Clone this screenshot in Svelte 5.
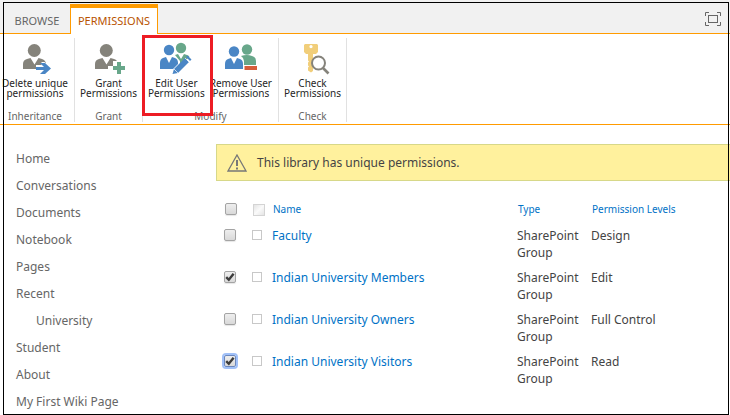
<script>
  let nav = [
    { label: 'Home' },
    { label: 'Conversations' },
    { label: 'Documents' },
    { label: 'Notebook' },
    { label: 'Pages' },
    { label: 'Recent' },
    { label: 'University', child: true },
    { label: 'Student' },
    { label: 'About' },
    { label: 'My First Wiki Page' }
  ];

  let rows = $state([
    { name: 'Faculty', level: 'Design', checked: false },
    { name: 'Indian University Members', level: 'Edit', checked: true },
    { name: 'Indian University Owners', level: 'Full Control', checked: false },
    { name: 'Indian University Visitors', level: 'Read', checked: true, focused: true }
  ]);
  let all = $state(false);
</script>

{#snippet tick()}
  <svg class="tick" viewBox="0 0 12 12" aria-hidden="true">
    <path d="M2.2 6.2 L4.8 8.8 L9.6 2.8" fill="none" stroke="#3c3c3c" stroke-width="2.4" />
  </svg>
{/snippet}

<div class="page">
  <header class="tabs">
    <button class="tab">BROWSE</button>
    <button class="tab active">PERMISSIONS</button>
    <button class="focus" aria-label="Focus on content">
      <svg width="16" height="14" viewBox="0 0 16 14" fill="none" stroke="#666">
        <path d="M.5 4V.5H4M12 .5h3.5V4M15.5 10v3.5H12M4 13.5H.5V10" />
        <rect x="3.5" y="3.5" width="9" height="7" />
      </svg>
    </button>
  </header>

  <div class="ribbon">
    <section class="group inheritance">
      <div class="tools">
        <button>
          <svg viewBox="0 0 32 32">
            <g fill="#85837b">
              <circle cx="15.3" cy="8.5" r="6.5" />
              <path d="M4 27v-5q0-4 4-5l3.5-1 4 6.5 4-6.5 3.5 1q3.5 1 4 4.5l-1.5-1.5h-3v3H17v4z" />
            </g>
            <path d="M17 25h8l-4-4h5l6 5.500-6 5.500h-5l4-4h-8z" fill="#4a86c5" />
          </svg>
          <span>Delete unique<br />permissions</span>
        </button>
      </div>
      <h2>Inheritance</h2>
    </section>
    <section class="group grant">
      <div class="tools">
        <button>
          <svg viewBox="0 0 32 32">
            <g fill="#85837b">
              <circle cx="13.3" cy="8.5" r="6.5" />
              <path d="M2 27v-5q0-4 4-5l3.5-1 4 6.5 4-6.5 3.5 1q2 .6 3 2h-4v5h-5v3z" />
            </g>
            <path d="M24 20h4v4h4v4h-4v4h-4v-4h-4v-4h4z" fill="#68a78a" />
          </svg>
          <span>Grant<br />Permissions</span>
        </button>
      </div>
      <h2>Grant</h2>
    </section>
    <section class="group modify">
      <div class="tools">
        <button class="marked">
          <svg viewBox="0 0 32 32">
            <g fill="#68a78a">
              <circle cx="21" cy="6" r="5.2" />
              <path d="M15 13l3-1 3 5 3-5 3 1q2 .6 2.5 2L20 23v-4z" />
            </g>
            <g fill="#4a86c5">
              <circle cx="9" cy="8" r="5.2" />
              <path d="M0 27v-6q0-4 3-5l3-1 3 6 3-6 3 1q3 1 3 5v1l-5 5z" />
              <path d="M12.5 32l1.5-5L25 16l4 4-11 11z" />
              <path d="M26 15l1.5-1.5 4 4L30 19z" />
            </g>
            <path d="M14 27l4 4M25 16l4 4" stroke="#fff" stroke-width=".7" />
          </svg>
          <span>Edit User<br />Permissions</span>
        </button>
        <button class="remove">
          <svg viewBox="0 0 32 32">
            <g fill="#68a78a">
              <circle cx="22" cy="7.5" r="5.2" />
              <path d="M16 14q6-2 11 0 4 1 4 5v4H19v-4q0-3-3-5z" />
            </g>
            <g fill="#4a86c5">
              <circle cx="9" cy="9.5" r="5.2" />
              <path d="M0 27v-5q0-4 3-5l3-1 3 6 3-6 3 1q3 1 3 5v5z" />
            </g>
            <path d="M19.500 24H32v4H19.500z" fill="#d65d3b" />
          </svg>
          <span>Remove User<br />Permissions</span>
        </button>
      </div>
      <h2>Modify</h2>
    </section>
    <section class="group check">
      <div class="tools">
        <button>
          <svg viewBox="0 0 32 32">
            <path
              d="M8 2h12l1 1v7l-2 2h-3v17l-2 1.500-3-2v-3l1-1-1-1v-3l1-1-1-1V12H9l-2-2V3zM14 3a1.600 1.600 0 1 0 .01 0z"
              fill="#f1ce7a"
              fill-rule="evenodd"
            />
            <circle cx="21.5" cy="21" r="6.5" fill="#fff" stroke="#85837b" stroke-width="2" />
            <path d="M26 26l5.5 5.5" stroke="#85837b" stroke-width="2.6" />
          </svg>
          <span>Check<br />Permissions</span>
        </button>
      </div>
      <h2>Check</h2>
    </section>
  </div>

  <div class="body">
    <nav>
      {#each nav as item}
        <a href="#top" class:child={item.child}>{item.label}</a>
      {/each}
    </nav>

    <main>
      <div class="notice">
        <svg width="20" height="18" viewBox="0 0 20 18" fill="none" stroke="#777">
          <path d="M10 1L19 17H1z" stroke-width="1.3" />
          <path d="M10 6v6M10 13.5v2" stroke-width="2" />
        </svg>
        <span>This library has unique permissions.</span>
      </div>

      <table>
        <thead>
          <tr>
            <th class="sel">
              <label class="box"><input type="checkbox" aria-label="Select all" bind:checked={all} />{#if all}{@render tick()}{/if}</label>
            </th>
            <th class="pic"><span class="thumb"></span></th>
            <th class="name"><a href="#top">Name</a></th>
            <th class="type"><a href="#top">Type</a></th>
            <th><a href="#top">Permission Levels</a></th>
          </tr>
        </thead>
        <tbody>
          {#each rows as row}
            <tr>
              <td class="sel">
                <label class="box" class:focused={row.focused}>
                  <input type="checkbox" aria-label={row.name} bind:checked={row.checked} />{#if row.checked}{@render tick()}{/if}
                </label>
              </td>
              <td class="pic"><span class="presence"></span></td>
              <td><a href="#top">{row.name}</a></td>
              <td>SharePoint Group</td>
              <td>{row.level}</td>
            </tr>
          {/each}
        </tbody>
      </table>
    </main>
  </div>
</div>

<style>
  .page {
    position: relative;
    box-sizing: border-box;
    height: 100vh;
    min-width: 600px;
    overflow: hidden;
    background: #fff;
    color: #444;
    font-family: 'Noto Sans', 'Open Sans', sans-serif;
    font-size: 12px;
  }
  .page::after {
    content: '';
    position: absolute;
    inset: 2px 1px 0 3px;
    border: 1px solid #000;
    pointer-events: none;
  }
  button {
    margin: 0;
    padding: 0;
    border: 0;
    background: none;
    color: inherit;
    font: inherit;
  }
  a {
    color: #0072c6;
    text-decoration: none;
  }

  .tabs {
    display: flex;
    box-sizing: border-box;
    height: 34px;
    padding: 4px 9px 0 4px;
    background: #f1f1f1;
    border-bottom: 1px solid #ff9b00;
  }
  .tab {
    width: 66px;
    color: #666;
    font-size: 11px;
    line-height: 34px;
  }
  .tab.active {
    width: 88px;
    margin-bottom: -1px;
    background: #fff;
    border: 1px solid #ff9b00;
    border-top-width: 4px;
    border-bottom: 0;
    color: #b85300;
    line-height: 26px;
  }
  .focus {
    display: flex;
    align-items: center;
    margin-left: auto;
  }

  .ribbon {
    display: flex;
    height: 90px;
    border-bottom: 1px solid #ff9b00;
  }
  .group {
    display: flex;
    flex-direction: column;
    box-sizing: border-box;
    margin: 4px 0 2px;
    border-right: 1px solid #e1e1e1;
  }
  .inheritance {
    width: 75px;
    padding-right: 4px;
  }
  .grant,
  .check {
    width: 68px;
  }
  .modify {
    width: 136px;
  }
  .tools {
    display: flex;
    flex: 1;
  }
  .tools button {
    position: relative;
    display: flex;
    flex-direction: column;
    align-items: center;
    flex: 1;
    padding-top: 4px;
    color: #262626;
    font-size: 10px;
    line-height: 10px;
    white-space: nowrap;
  }
  .tools .remove {
    flex: 0 0 60px;
    margin-right: 6px;
  }
  .tools svg {
    width: 32px;
    height: 32px;
    margin-bottom: 4px;
    overflow: visible;
  }
  .marked::after {
    content: '';
    position: absolute;
    z-index: 1;
    inset: -3px -3px -6px -1px;
    border: 3px solid #ed1c24;
  }
  h2 {
    margin: 0;
    color: #666;
    font-size: 10px;
    font-weight: 400;
    line-height: 12px;
    text-align: center;
  }

  .body {
    display: flex;
    padding-top: 19px;
  }
  nav {
    display: flex;
    flex-direction: column;
    flex: 0 0 200px;
    padding: 1px 0 0 16px;
    line-height: 27px;
  }
  nav a {
    color: #666;
  }
  nav .child {
    padding-left: 20px;
  }
  main {
    flex: 1;
  }
  .notice {
    display: flex;
    align-items: center;
    gap: 10px;
    height: 35px;
    padding-left: 10px;
    background: #fff19d;
    border: solid #d7d889;
    border-width: 1px 0 1px 1px;
  }

  table {
    width: 100%;
    margin-top: 16px;
    border-collapse: collapse;
    table-layout: fixed;
    line-height: 17px;
  }
  th,
  td {
    padding: 4px 0;
    text-align: left;
    vertical-align: top;
  }
  th {
    padding: 4px 0 5px 1px;
    font-size: 10px;
    font-weight: 400;
  }
  .sel {
    width: 28px;
    padding-left: 8px;
  }
  th.sel {
    padding-left: 9px;
    width: 27px;
  }
  .pic {
    width: 20px;
  }
  th.pic {
    width: 19px;
  }
  th.name {
    width: 244px;
  }
  th.type {
    width: 73px;
  }
  td:nth-child(4) {
    padding-right: 8px;
  }
  .box {
    position: relative;
    display: block;
    width: 12px;
    height: 12px;
    margin-top: 2px;
  }
  .box input {
    display: block;
    box-sizing: border-box;
    width: 12px;
    height: 12px;
    margin: 0;
    appearance: none;
    border: 1px solid #a4a4a4;
    border-radius: 2px;
    background: linear-gradient(#eee, #d9d9d9);
    box-shadow: 0 1px 1px #e6e6e6;
  }
  .focused input {
    border-color: #6b87bd;
    box-shadow: 0 0 0 2px #a0c0f8;
  }
  .tick {
    position: absolute;
    inset: 0;
    pointer-events: none;
  }
  .thumb,
  .presence {
    display: block;
    box-sizing: border-box;
    border: 1px solid #c8c8c8;
  }
  .thumb {
    width: 12px;
    height: 12px;
    margin-top: 3px;
    border-color: #d4d4d4;
    background: linear-gradient(135deg, #e4e4e4, #fafafa 50%, #e4e4e4);
  }
  .presence {
    width: 10px;
    height: 10px;
    margin-top: 3px;
  }
</style>
